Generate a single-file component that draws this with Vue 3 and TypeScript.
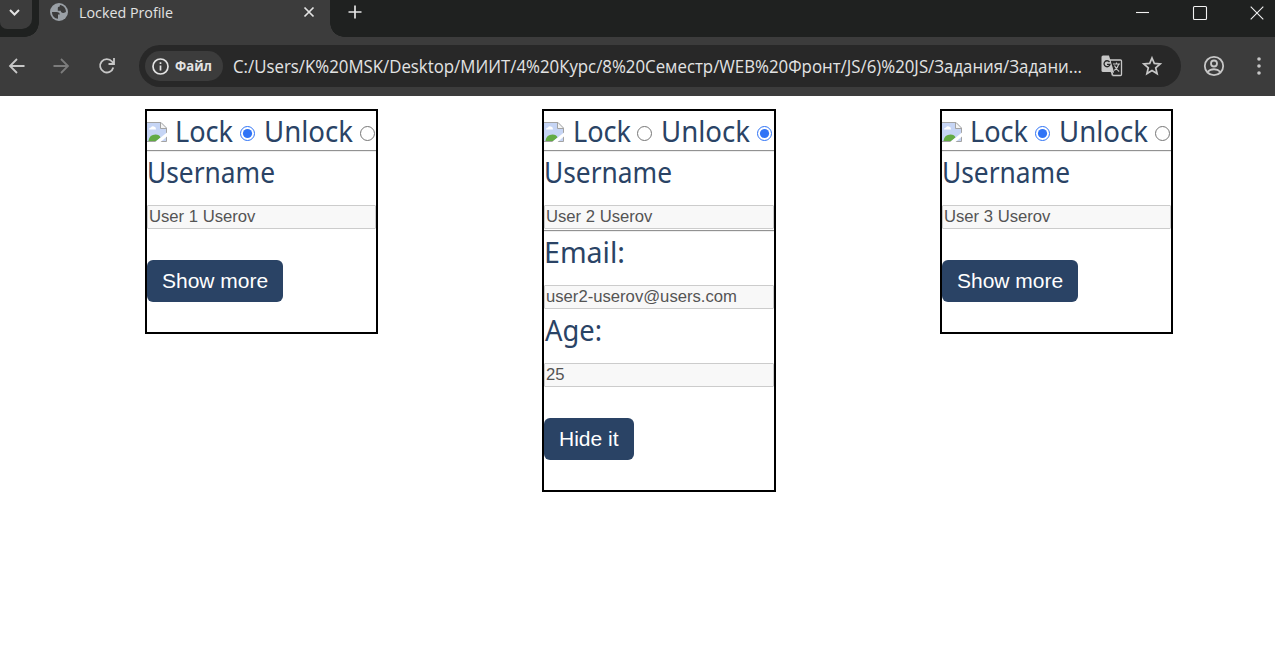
<script setup lang="ts">
import { reactive } from 'vue'

interface Field { label: string; value: string; labelWidth: number; height: number; baseline: number; rule: boolean; x: number }
interface Profile { id: number; name: string; locked: boolean; open: boolean; width: number; lockX: number; details: Field[] }

const profiles = reactive<Profile[]>([
  { id: 1, name: 'User 1 Userov', locked: true, open: false, width: 229, lockX: 28, details: [] },
  {
    id: 2, name: 'User 2 Userov', locked: false, open: true, width: 230, lockX: 29,
    details: [
      { label: 'Email:', value: 'user2-userov@users.com', labelWidth: 81, height: 53, baseline: 31, rule: true, x: 0 },
      { label: 'Age:', value: '25', labelWidth: 57, height: 54, baseline: 32, rule: false, x: 1 },
    ],
  },
  { id: 3, name: 'User 3 Userov', locked: true, open: false, width: 229, lockX: 28, details: [] },
])

const address = 'C:/Users/K%20MSK/Desktop/МИИТ/4%20Курс/8%20Семестр/WEB%20Фронт/JS/6)%20JS/Задания/Задани...'
</script>

<template>
  <div class="window">
    <header class="strip">
      <div class="tab-search">
        <svg width="32" height="29" viewBox="0 0 32 29"><path d="M10 10l4.500 4.500L19 10" /></svg>
      </div>
      <div class="tab">
        <svg class="globe" width="18" height="18" viewBox="0 0 18 18">
          <circle cx="9" cy="9" r="9" fill="#9aa0a6" />
          <path d="M2 9h4.500c2.200 0 3.300.9 3.300 2.500H8v4.300C4.500 15.500 2 13 2 9zM10 2.100C13.300 2.500 15.800 5 16 8.600c-.6 1-1.500 1.300-2.800 1.300-1.700 0-2.300-.8-2.500-2.200H7.800V5.200c0-1 .6-1.400 1.700-1.400z" fill="#3c3c3c" />
        </svg>
        <svg class="title" width="100" height="24"><text x="0" y="18" textLength="94" lengthAdjust="spacingAndGlyphs">Locked Profile</text></svg>
        <svg class="close" width="10" height="10" viewBox="0 0 10 10"><path d="M.5.5l9 9M9.500.5l-9 9" /></svg>
      </div>
      <svg class="plus" width="14" height="14" viewBox="0 0 14 14"><path d="M7 .5v13M.5 7h13" /></svg>
      <div class="controls">
        <svg width="14" height="14" viewBox="0 0 14 14"><path d="M0 6.500h13" /></svg>
        <svg width="14" height="14" viewBox="0 0 14 14"><rect x=".5" y=".5" width="13" height="13" rx="1" /></svg>
        <svg width="14" height="14" viewBox="0 0 14 14"><path d="M.7.7l12.600 12.600M13.300.7L.7 13.300" /></svg>
      </div>
    </header>

    <nav class="toolbar">
      <svg class="nav" width="16" height="16" viewBox="0 0 16 16"><path d="M15.500 8H1M8 1L1 8l7 7" /></svg>
      <svg class="nav forward" width="16" height="16" viewBox="0 0 16 16"><path d="M.5 8H15M8 1l7 7-7 7" /></svg>
      <svg class="nav reload" width="16" height="16" viewBox="0 0 16 16"><path d="M14.300 9.500A6.700 6.700 0 1 1 13 3.500l1.500 2M15 0v6H9.500" /></svg>
      <div class="omnibox">
        <div class="chip">
          <svg width="17" height="17" viewBox="0 0 17 17"><circle cx="8.500" cy="8.500" r="7.500" /><path d="M8.500 7.500v5M8.500 4.300v1.800" /></svg>
          <svg class="chip-text" width="40" height="20"><text x="0" y="15" textLength="37" lengthAdjust="spacingAndGlyphs">Файл</text></svg>
        </div>
        <svg class="address" width="855" height="30"><text x="0" y="22" textLength="849" lengthAdjust="spacingAndGlyphs">{{ address }}</text></svg>
        <svg class="translate" width="22" height="22" viewBox="0 0 22 22">
          <path d="M9 5h10.500q1 0 1 1v13.500q0 1-1 1H12L9 14z" fill="none" stroke="#c7c7c7" stroke-width="1.300" />
          <path d="M2 .5h6L13 17H2Q.5 17 .5 15.500V2Q.5.5 2 .5z" fill="#c7c7c7" />
          <path d="M11.500 17l-1.500 4 3-4z" fill="#c7c7c7" />
          <path d="M8.500 7A3 3 0 1 0 9 9.300H6" fill="none" stroke="#282828" stroke-width="1.300" />
          <path d="M12 9h7M15.500 7.500V9M17.800 9c-.8 3-2.300 5-4.500 6.500M13.500 10.500c1 2.500 2.500 4.500 4.700 6" fill="none" stroke="#c7c7c7" stroke-width="1.100" />
        </svg>
        <svg class="star" width="20" height="20" viewBox="0 0 20 20"><path d="M10 2l2.300 5.400 5.900.5-4.500 3.900 1.400 5.800-5.100-3.100-5.100 3.100 1.400-5.800L1.800 7.900l5.900-.5z" /></svg>
      </div>
      <svg class="account" width="22" height="22" viewBox="0 0 22 22"><circle cx="11" cy="11" r="9.200" /><circle cx="11" cy="8.500" r="3" /><path d="M4.500 17c3.500-3.700 9.500-3.700 13 0" /></svg>
      <svg class="menu" width="4" height="18" viewBox="0 0 4 18"><circle cx="2" cy="2" r="1.800" /><circle cx="2" cy="9" r="1.800" /><circle cx="2" cy="16" r="1.800" /></svg>
    </nav>

    <main class="profiles">
      <section v-for="p in profiles" :key="p.id" class="profile">
        <svg class="locks" :width="p.width" height="39">
          <g transform="translate(0 11)">
            <path d="M0 .5h14l5.500 5.500v13.500H0z" fill="#c6d5f5" />
            <path d="M14 .5v5.500h5.500z" fill="#f4f4f4" />
            <path d="M2 7.500q0-1.800 2-2 1-2 3-1 2.200.3 2 3z" fill="#fff" />
            <path d="M1.500 18.500q1-6 7-6 4 0 5 3l-5 4H1.500z" fill="#63ab45" />
            <path d="M0 .5h14l5.500 5.500v13.500H0M13.500.5v6h6" fill="none" stroke="#a3a3a3" />
            <path d="M20 10.500L7.500 20.500h5.500L20 14.500z" fill="#fff" />
          </g>
          <text :x="p.lockX" y="31" textLength="58" lengthAdjust="spacingAndGlyphs">Lock</text>
          <text x="117" y="31" textLength="89" lengthAdjust="spacingAndGlyphs">Unlock</text>
          <g class="radio" :class="{ checked: p.locked }" @click="p.locked = true">
            <circle class="ring" cx="100.500" cy="22.500" r="7" /><circle class="dot" cx="100.500" cy="22.500" r="4.600" />
          </g>
          <g class="radio" :class="{ checked: !p.locked }" @click="p.locked = false">
            <circle class="ring" cx="220.500" cy="22.500" r="7" /><circle class="dot" cx="220.500" cy="22.500" r="4.600" />
          </g>
        </svg>
        <hr />
        <svg class="label" :width="p.width" height="53"><text x="0" y="31" textLength="128" lengthAdjust="spacingAndGlyphs">Username</text></svg>
        <div class="field" :style="{ width: p.width + 'px' }">{{ p.name }}</div>
        <template v-if="p.open">
          <template v-for="d in p.details" :key="d.label">
            <hr v-if="d.rule" class="spaced" />
            <svg class="label" :width="p.width" :height="d.height"><text :x="d.x" :y="d.baseline" :textLength="d.labelWidth" lengthAdjust="spacingAndGlyphs">{{ d.label }}</text></svg>
            <div class="field" :style="{ width: p.width + 'px' }">{{ d.value }}</div>
          </template>
        </template>
        <button type="button" @click="!p.locked && (p.open = !p.open)">{{ p.open ? 'Hide it' : 'Show more' }}</button>
      </section>
    </main>
  </div>
</template>

<style>
body { margin: 0; background: #fff; overflow: hidden; }
</style>

<style scoped>
.window { width: 1275px; height: 645px; overflow: hidden; background: #fff; }
svg { display: block; flex: none; overflow: visible; }
.strip { display: flex; height: 37px; background: #1f2120; }
.tab-search { position: relative; z-index: 1; width: 32px; height: 29px; border-radius: 0 0 10px 7px; background: #3c3c3c; }
.tab-search path { fill: none; stroke: #e3e3e3; stroke-width: 2; }
.tab { position: relative; display: flex; align-items: flex-start; box-sizing: border-box; width: 291px; height: 37px; margin-left: 7px; padding-left: 11px; background: #3c3c3c; }
.tab::before, .tab::after { content: ''; position: absolute; bottom: 0; width: 14px; height: 14px; }
.tab::before { left: -14px; background: radial-gradient(circle at 0 0, #1f2120 13.500px, #3c3c3c 14px); }
.tab::after { right: -14px; background: radial-gradient(circle at 100% 0, #1f2120 13.500px, #3c3c3c 14px); }
.globe { margin-top: 3px; }
.title { margin-left: 11px; }
.title text { font: 14.500px "Open Sans", "Noto Sans", sans-serif; fill: #e3e3e3; }
.close { margin: 7px 0 0 125px; }
.close path, .plus path { fill: none; stroke: #e3e3e3; stroke-width: 1.700; }
.plus { margin: 5px 0 0 18px; }
.controls { display: flex; gap: 43px; margin: 6px 11px 0 auto; }
.controls path, .controls rect { fill: none; stroke: #f1f1f1; stroke-width: 1.100; }
.toolbar { display: flex; align-items: center; box-sizing: border-box; height: 59px; padding: 0 0 1px 9px; background: #3c3c3c; }
.nav { margin-right: 28px; }
.nav path { fill: none; stroke: #c7c7c7; stroke-width: 1.800; }
.forward { margin-right: 30px; }
.forward path { stroke: #7c7c7c; }
.reload { margin-right: 24px; }
.omnibox { display: flex; align-items: center; box-sizing: border-box; width: 1042px; height: 42px; padding-left: 6px; border-radius: 21px; background: #282828; }
.chip { display: flex; align-items: center; box-sizing: border-box; width: 78px; height: 30px; padding-left: 7px; border-radius: 15px; background: #3c3c3c; }
.chip circle, .chip path { fill: none; stroke: #e3e3e3; stroke-width: 1.700; }
.chip-text { margin-left: 6px; }
.chip-text text { font: 700 14px "Open Sans", "Noto Sans", sans-serif; fill: #e3e3e3; }
.address { margin-left: 10px; }
.address text { font: 17.500px "Open Sans", "Noto Sans", sans-serif; fill: #e3e3e3; }
.translate { margin-left: 13px; }
.star { margin-left: 19px; }
.star path { fill: none; stroke: #c7c7c7; stroke-width: 1.700; }
.account { margin-left: 22px; }
.account circle, .account path { fill: none; stroke: #c7c7c7; stroke-width: 1.800; }
.menu { margin-left: 32px; }
.menu circle { fill: #c7c7c7; }
.profiles { display: flex; align-items: flex-start; gap: 164px; padding: 13px 0 0 145px; }
.profile { flex: none; border: 2px solid #000; padding-bottom: 30px; }
.locks text, .label text { font: 29px "Noto Sans", "Open Sans", sans-serif; fill: #2a4365; }
.ring { fill: #fff; stroke: #767676; stroke-width: 1; }
.dot { fill: none; }
.checked .ring { stroke: #2f73f6; }
.checked .dot { fill: #2f73f6; }
hr { height: 1px; margin: 0; border: 0; border-top: 1px solid #929292; background: #eee; }
.spaced { margin-top: 1px; }
.field { box-sizing: border-box; height: 24px; padding-left: 1px; border: 1px solid #ccc; border-radius: 1px; background: #f8f8f8; color: #545454; font: 16.670px/21px "Liberation Sans", Arial, sans-serif; }
button { display: block; height: 42px; margin-top: 31px; padding: 0 15px; border: 0; border-radius: 6px; background: #2a4365; color: #fff; font: 21px/42px "Liberation Sans", Arial, sans-serif; }
</style>
